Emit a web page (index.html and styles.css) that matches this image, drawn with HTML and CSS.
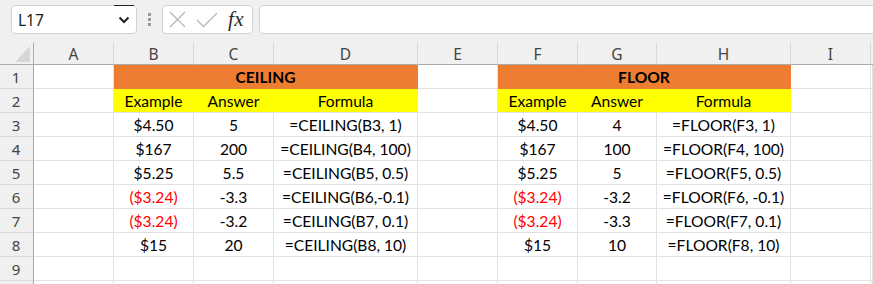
FILE: index.html
```html
<!DOCTYPE html>
<html>
<head>
<meta charset="utf-8">
<link rel="stylesheet" href="styles.css">
</head>
<body>
<div class="toolbar">
  <div class="namebox">
    <span class="name">L17</span>
    <svg class="chev" width="12" height="8" viewBox="0 0 12 8"><path d="M1.5 1.5 L6 6 L10.5 1.5" fill="none" stroke="#222" stroke-width="2"/></svg>
    <span class="mark"></span>
  </div>
  <div class="dots"><i></i><i></i><i></i></div>
  <div class="fxbox">
    <svg class="x" width="17" height="17" viewBox="0 0 17 17"><path d="M1 1 L16 16 M16 1 L1 16" stroke="#b8b8b8" stroke-width="1.4" fill="none"/></svg>
    <svg class="ok" width="22" height="16" viewBox="0 0 22 16"><path d="M1 8 L7.5 14.5 L21 1" stroke="#b8b8b8" stroke-width="1.4" fill="none"/></svg>
    <span class="fx">fx</span>
  </div>
  <div class="formula"></div>
</div>
<div class="sheet">
  <div class="ch corner"><span class="tri"></span></div>
  <div class="ch">A</div><div class="ch">B</div><div class="ch">C</div><div class="ch">D</div><div class="ch">E</div><div class="ch">F</div><div class="ch">G</div><div class="ch">H</div><div class="ch">I</div><div class="ch end"></div>

  <div class="rh">1</div><div class="c"></div><div class="c orange span3"><b>CEILING</b></div><div class="c"></div><div class="c orange span3"><b>FLOOR</b></div><div class="c"></div><div class="c"></div>

  <div class="rh">2</div><div class="c"></div><div class="c yellow">Example</div><div class="c yellow">Answer</div><div class="c yellow last">Formula</div><div class="c"></div><div class="c yellow">Example</div><div class="c yellow">Answer</div><div class="c yellow last">Formula</div><div class="c"></div><div class="c"></div>

  <div class="rh">3</div><div class="c"></div><div class="c">$4.50</div><div class="c">5</div><div class="c">=CEILING(B3, 1)</div><div class="c"></div><div class="c">$4.50</div><div class="c">4</div><div class="c">=FLOOR(F3, 1)</div><div class="c"></div><div class="c"></div>

  <div class="rh">4</div><div class="c"></div><div class="c">$167</div><div class="c">200</div><div class="c">=CEILING(B4, 100)</div><div class="c"></div><div class="c">$167</div><div class="c">100</div><div class="c">=FLOOR(F4, 100)</div><div class="c"></div><div class="c"></div>

  <div class="rh">5</div><div class="c"></div><div class="c">$5.25</div><div class="c">5.5</div><div class="c">=CEILING(B5, 0.5)</div><div class="c"></div><div class="c">$5.25</div><div class="c">5</div><div class="c">=FLOOR(F5, 0.5)</div><div class="c"></div><div class="c"></div>

  <div class="rh">6</div><div class="c"></div><div class="c red">($3.24)</div><div class="c">-3.3</div><div class="c">=CEILING(B6,-0.1)</div><div class="c"></div><div class="c red">($3.24)</div><div class="c">-3.2</div><div class="c">=FLOOR(F6, -0.1)</div><div class="c"></div><div class="c"></div>

  <div class="rh">7</div><div class="c"></div><div class="c red">($3.24)</div><div class="c">-3.2</div><div class="c">=CEILING(B7, 0.1)</div><div class="c"></div><div class="c red">($3.24)</div><div class="c">-3.3</div><div class="c">=FLOOR(F7, 0.1)</div><div class="c"></div><div class="c"></div>

  <div class="rh">8</div><div class="c"></div><div class="c">$15</div><div class="c">20</div><div class="c">=CEILING(B8, 10)</div><div class="c"></div><div class="c">$15</div><div class="c">10</div><div class="c">=FLOOR(F8, 10)</div><div class="c"></div><div class="c"></div>

  <div class="rh">9</div><div class="c"></div><div class="c"></div><div class="c"></div><div class="c"></div><div class="c"></div><div class="c"></div><div class="c"></div><div class="c"></div><div class="c"></div><div class="c"></div>

  <div class="rh"></div><div class="c"></div><div class="c"></div><div class="c"></div><div class="c"></div><div class="c"></div><div class="c"></div><div class="c"></div><div class="c"></div><div class="c"></div><div class="c"></div>
</div>
</body>
</html>
```
FILE: styles.css
```css
* { box-sizing: border-box; }
html, body { margin: 0; padding: 0; }
body {
  width: 873px;
  height: 284px;
  overflow: hidden;
  background: #ffffff;
  font-family: "Lato", "Liberation Sans", sans-serif;
}

.toolbar {
  height: 43px;
  background: #f0f0f0;
  display: flex;
  align-items: flex-start;
  padding-top: 5px;
  overflow: hidden;
}
.namebox {
  position: relative;
  margin-left: 11px;
  width: 126px;
  height: 29px;
  background: #fff;
  border: 1px solid #d2d2d2;
  border-radius: 4px;
  display: flex;
  align-items: center;
  justify-content: space-between;
  padding: 0 6px 0 6px;
}
.name {
  font-family: "Noto Sans", "Open Sans", sans-serif;
  font-size: 15.5px;
  color: #1e1e1e;
}
.chev { margin-top: 1px; }
.mark {
  position: absolute;
  top: -1px;
  left: 102px;
  width: 20px;
  height: 1px;
  background: #222;
}
.dots {
  margin-left: 11px;
  margin-top: 8px;
  display: flex;
  flex-direction: column;
  gap: 2px;
}
.dots i {
  display: block;
  width: 3px;
  height: 3px;
  background: #9a9a9a;
}
.fxbox {
  margin-left: 11px;
  width: 91px;
  height: 29px;
  background: #fff;
  border: 1px solid #d2d2d2;
  border-radius: 4px;
  display: flex;
  align-items: center;
  padding-left: 6px;
}
.fxbox .ok { margin-left: 10px; }
.fx {
  margin-left: 10px;
  font-family: "Liberation Serif", serif;
  font-style: italic;
  font-size: 21px;
  color: #2b2b2b;
  letter-spacing: 0.5px;
}
.formula {
  margin-left: 6px;
  flex: 1;
  height: 29px;
  margin-right: -10px;
  background: #fff;
  border: 1px solid #d2d2d2;
  border-radius: 4px;
}

.sheet {
  display: grid;
  grid-template-columns: 34px 80px 80px 80px 144px 80px 80px 79px 134px 80px 1fr;
  grid-template-rows: 22px;
  grid-auto-rows: 24px;
}
.ch {
  background: #f0f0f0;
  border-right: 1px solid #d8d8d8;
  border-bottom: 1px solid #ababab;
  display: flex;
  align-items: center;
  justify-content: center;
  font-family: "Noto Sans", "Open Sans", sans-serif;
  font-size: 15.5px;
  color: #444;
}
.ch.corner {
  position: relative;
  border-right: 1px solid #ababab;
}
.tri {
  position: absolute;
  right: 3px;
  bottom: 2px;
  width: 0;
  height: 0;
  border-left: 15px solid transparent;
  border-bottom: 16px solid #d6d6d6;
}
.ch.end { border-right: none; }
.rh {
  background: #f0f0f0;
  border-right: 1px solid #a6a6a6;
  border-bottom: 1px solid #d9d9d9;
  display: flex;
  align-items: center;
  justify-content: center;
  font-family: "Noto Sans", "Open Sans", sans-serif;
  font-size: 15px;
  color: #444;
  padding-right: 1px;
}
.c {
  border-right: 1px solid #e1e1e1;
  border-bottom: 1px solid #e1e1e1;
  display: flex;
  align-items: center;
  justify-content: center;
  font-size: 15.6px;
  color: #000;
  white-space: nowrap;
  padding-top: 1px;
}
.c b { font-weight: 700; }
.span3 { grid-column: span 3; }
.orange {
  background: #ed7d31;
  border-right-color: #ed7d31;
  border-bottom-color: #ed7d31;
}
.yellow {
  background: #ffff00;
  border-right-color: #ffff00;
}
.red { color: #ff0000; }
```
